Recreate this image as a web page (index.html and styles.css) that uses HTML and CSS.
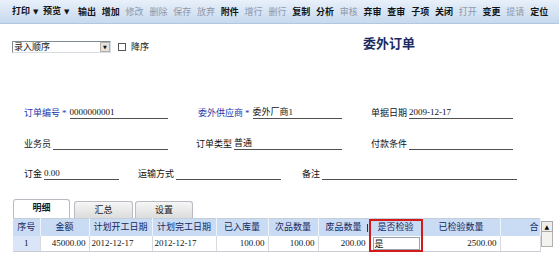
FILE: index.html
```html
<!DOCTYPE html>
<html lang="zh-CN">
<head>
<meta charset="utf-8">
<title>委外订单</title>
<link rel="stylesheet" href="styles.css">
</head>
<body>
<div class="toolbar">
  <span class="tb dd">打印<i>▼</i></span>
  <span class="tb dd2">预览<i>▼</i></span>
  <span class="tb">输出</span>
  <span class="tb">增加</span>
  <span class="tb off">修改</span>
  <span class="tb off">删除</span>
  <span class="tb off">保存</span>
  <span class="tb off">放弃</span>
  <span class="tb">附件</span>
  <span class="tb off">增行</span>
  <span class="tb off">删行</span>
  <span class="tb">复制</span>
  <span class="tb">分析</span>
  <span class="tb off">审核</span>
  <span class="tb">弃审</span>
  <span class="tb">查审</span>
  <span class="tb">子项</span>
  <span class="tb">关闭</span>
  <span class="tb off">打开</span>
  <span class="tb">变更</span>
  <span class="tb off">提请</span>
  <span class="tb">定位</span>
</div>

<div class="head">
  <div class="sort">
    <div class="select"><span class="sel-text">录入顺序</span><span class="sel-btn">▼</span></div>
    <span class="check"></span><span class="check-lbl">降序</span>
  </div>
  <h1 class="title">委外订单</h1>
</div>

<div class="form">
  <div class="frow r1">
    <div class="field w144"><span class="lbl req">订单编号</span><span class="star">*</span><span class="line">0000000001</span></div>
    <div class="field w144 ml30"><span class="lbl req">委外供应商</span><span class="star">*</span><span class="line">委外厂商1</span></div>
    <div class="field w142 ml29"><span class="lbl">单据日期</span><span class="line">2009-12-17</span></div>
  </div>
  <div class="frow r2">
    <div class="field w144"><span class="lbl">业务员</span><span class="line"></span></div>
    <div class="field w146 ml28"><span class="lbl">订单类型</span><span class="line">普通</span></div>
    <div class="field w142 ml29"><span class="lbl">付款条件</span><span class="line"></span></div>
  </div>
  <div class="frow r3">
    <div class="field w95"><span class="lbl">订金</span><span class="line">0.00</span></div>
    <div class="field w143 ml19"><span class="lbl">运输方式</span><span class="line"></span></div>
    <div class="field w215 ml21"><span class="lbl">备注</span><span class="line"></span></div>
  </div>
</div>

<div class="tabs">
  <span class="tab active">明细</span>
  <span class="tab t2">汇总</span>
  <span class="tab t3">设置</span>
</div>

<div class="grid-wrap">
  <table class="grid">
    <colgroup>
      <col class="c27"><col class="c49"><col class="c63"><col class="c64"><col class="c52">
      <col class="c50"><col class="c51"><col class="c53"><col class="c78"><col class="c40">
    </colgroup>
    <thead>
      <tr>
        <th>序号</th><th>金额</th><th>计划开工日期</th><th>计划完工日期</th><th>已入库量</th>
        <th>次品数量</th><th class="mark">废品数量</th><th>是否检验</th><th>已检验数量</th><th class="last">合</th>
      </tr>
    </thead>
    <tbody>
      <tr>
        <td class="rowno">1</td>
        <td class="num">45000.00</td>
        <td class="txt">2012-12-17</td>
        <td class="txt">2012-12-17</td>
        <td class="num">100.00</td>
        <td class="num">100.00</td>
        <td class="num">200.00</td>
        <td class="edit"><span class="edit-box">是</span></td>
        <td class="num">2500.00</td>
        <td></td>
      </tr>
    </tbody>
  </table>
  <div class="vscroll">
    <span class="sb-btn">▲</span>
    <span class="sb-thumb"></span>
  </div>
  <div class="highlight"></div>
</div>
</body>
</html>
```

FILE: styles.css
```css
* { box-sizing: border-box; }
html, body { margin: 0; padding: 0; background: #fff; }
body {
  width: 559px;
  height: 262px;
  overflow: hidden;
  font-family: "Liberation Serif", "Noto Sans CJK SC", serif;
  font-size: 9px;
  color: #111;
}

/* toolbar */
.toolbar {
  height: 24px;
  border-bottom: 1px solid #b3c7de;
  background: linear-gradient(#e8f0fa, #c7d9ee);
  display: flex;
  align-items: center;
  padding-left: 12px;
  font-weight: bold;
  color: #141414;
}
.tb { flex: none; width: 23.8px; line-height: 12px; white-space: nowrap; }
.tb i { font-style: normal; font-size: 7px; margin-left: 3px; font-family: "DejaVu Sans", sans-serif; }
.dd { width: 31px; }
.dd2 { width: 35px; }
.off { color: #8d98a8; font-weight: normal; }

/* head */
.head { display: flex; align-items: flex-start; height: 82px; padding-left: 12px; }
.sort { width: 351px; display: flex; align-items: center; margin-top: 17px; }
.select {
  width: 99px; height: 12px;
  border: 1px solid #7f8c99;
  border-right-color: #d8dde3;
  border-bottom-color: #d8dde3;
  background: #fff;
  display: flex;
  align-items: center;
}
.sel-text { flex: 1; line-height: 10px; padding-left: 1px; }
.sel-btn {
  width: 10px; height: 10px;
  background: #e6e3dc;
  border: 1px solid #b3b0a8;
  font-size: 5px; line-height: 8px; text-align: center;
  font-family: "DejaVu Sans", sans-serif;
}
.check { width: 8px; height: 8px; border: 1px solid #555; background: #fff; margin-left: 7px; }
.check-lbl { margin-left: 5px; line-height: 12px; }
.title {
  margin: 11px 0 0 0;
  font-size: 13px;
  line-height: 15px;
  font-weight: bold;
  color: #1a2a62;
  font-family: "Noto Sans CJK SC", sans-serif;
}

/* form */
.form { padding-left: 24px; }
.frow { display: flex; height: 13px; }
.r2 { margin-top: 18px; }
.r3 { margin-top: 17px; }
.field { display: flex; align-items: flex-end; flex: none; }
.lbl { line-height: 12px; white-space: nowrap; margin-right: 2px; }
.req { color: #1c35a8; }
.star { line-height: 12px; color: #1c35a8; margin-right: 3px; }
.line { flex: 1; height: 13px; line-height: 12px; border-bottom: 1px solid #505050; white-space: nowrap; }
.w144 { width: 144px; }
.w146 { width: 146px; }
.w142 { width: 142px; }
.w143 { width: 143px; }
.w95 { width: 95px; }
.w215 { width: 215px; }
.ml30 { margin-left: 30px; }
.ml29 { margin-left: 29px; }
.ml28 { margin-left: 28px; }
.ml19 { margin-left: 19px; }
.ml21 { margin-left: 21px; }

/* tabs */
.tabs { display: flex; align-items: flex-end; margin: 19px 0 0 13px; height: 19px; }
.tab {
  height: 17px;
  border: 1px solid #b8bcc2;
  border-bottom: none;
  border-radius: 3px 3px 0 0;
  background: linear-gradient(#f6f6f6, #dcdcdc);
  text-align: center;
  line-height: 16px;
  color: #1a1a1a;
}
.tab.active { width: 57px; height: 19px; background: #fff; font-weight: bold; line-height: 17px; }
.t2 { width: 59px; margin-left: 4px; }
.t3 { width: 58px; margin-left: 2px; }

/* grid */
.grid-wrap { position: relative; display: flex; margin-left: 13px; width: 540px; }
.grid { border-collapse: collapse; table-layout: fixed; width: 527px; }
.c27 { width: 27px; } .c49 { width: 49px; } .c63 { width: 63px; } .c64 { width: 64px; }
.c52 { width: 52px; } .c50 { width: 50px; } .c51 { width: 51px; } .c53 { width: 53px; }
.c78 { width: 78px; } .c40 { width: 40px; }
.grid th {
  height: 17px;
  padding: 0;
  background: #c9dcf4;
  border-right: 1px solid #eef4fc;
  border-top: 1px solid #c3cedb;
  color: #16285e;
  font-weight: normal;
  font-family: "Noto Sans CJK SC", sans-serif;
  text-align: center;
  line-height: 16px;
  white-space: nowrap;
  overflow: hidden;
}
.grid th.last { text-align: right; padding-right: 1px; }
.grid th.mark { position: relative; }
.grid th.mark::after {
  content: "";
  position: absolute;
  right: 1px; top: 5px;
  width: 1px; height: 8px;
  background: #333;
}
.grid td {
  height: 16px;
  padding: 0;
  border-right: 1px solid #d6d9de;
  border-bottom: 1px solid #c8ccd2;
  line-height: 15px;
  white-space: nowrap;
  overflow: hidden;
}
.grid td.rowno { background: #dae6f7; text-align: center; }
.grid td.num { text-align: right; padding-right: 3px; }
.grid td.txt { padding-left: 2px; }
.grid td.edit { padding: 1px 2px 1px 3px; }
.edit-box {
  display: block;
  height: 13px;
  border: 1px solid #9aa3ad;
  line-height: 11px;
  padding-left: 1px;
  font-family: "Noto Sans CJK SC", sans-serif;
}

.vscroll { width: 13px; display: flex; flex-direction: column; padding-top: 3px; }
.sb-btn {
  height: 11px;
  background: #efede8;
  border: 1px solid #a8a8a8;
  font-size: 6px; line-height: 9px; text-align: center;
  font-family: "DejaVu Sans", sans-serif;
  color: #000;
}
.sb-thumb { height: 15px; background: #f3f2ef; border: 1px solid #b0b0b0; border-top: none; }

.highlight {
  position: absolute;
  left: 356px; top: 1px;
  width: 54px; height: 33px;
  border: 2px solid #d21a1a;
}
```
